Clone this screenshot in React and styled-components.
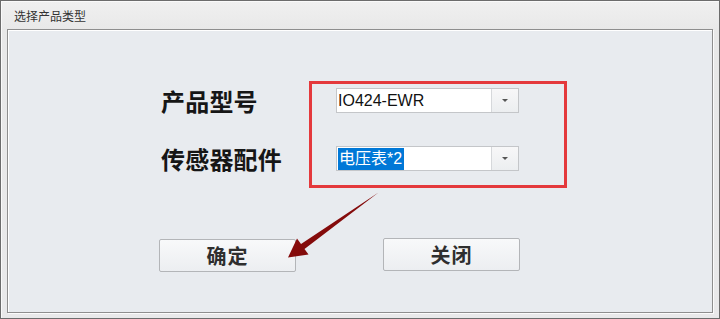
import React from 'react';
import styled, { createGlobalStyle } from 'styled-components';

const GlobalStyle = createGlobalStyle`
    html, body {
        margin: 0;
        padding: 0;
        background: #ffffff;
    }
    * {
        box-sizing: border-box;
    }
`;

const Frame = styled.div`
    position: relative;
    width: 720px;
    height: 319px;
    border: 1px solid #6c6c6c;
    background: linear-gradient(#f0f0f0, #e8e8e8 30px, #e9e9ea);
    box-shadow: inset 1px 1px 0 #fafafa;
    display: flex;
    flex-direction: column;
    font-family: "Noto Sans CJK SC", sans-serif;
`;

const TitleBar = styled.div`
    height: 28px;
    flex-shrink: 0;
    padding: 0 0 0 13px;
    display: flex;
    align-items: center;
    font-size: 12px;
    color: #333333;
`;

const Panel = styled.div`
    margin: 0 6px 0 6px;
    height: 284px;
    border: 1px solid #8e8e8e;
    box-shadow: inset 1px 1px 0 #ffffff, 1px 1px 0 #fbfbfb;
    background: #e8ebef;
    padding: 58px 0 0 151px;
    display: flex;
    flex-direction: column;
`;

const Form = styled.div`
    display: flex;
    flex-direction: column;
    gap: 33px;
    padding-left: 2px;
`;

const Row = styled.div`
    display: flex;
    align-items: center;
    height: 25px;
`;

const Label = styled.div`
    width: 175px;
    font-size: 24px;
    font-weight: 700;
    color: #161616;
    letter-spacing: 0.2px;
    line-height: 25px;
`;

const Combo = styled.div`
    width: 183px;
    height: 25px;
    border: 1px solid #c4c6c9;
    background: #ffffff;
    display: flex;
`;

const ComboText = styled.div`
    flex: 1;
    display: flex;
    align-items: center;
    padding-left: 1px;
    font-family: "Liberation Sans", "Noto Sans CJK SC", sans-serif;
    font-size: 16px;
    color: #111111;
`;

const Selected = styled.span`
    display: inline-block;
    height: 22px;
    line-height: 22px;
    padding: 0 2px 0 1px;
    background: #0078d7;
    color: #ffffff;
`;

const DropButton = styled.div`
    width: 27px;
    border-left: 1px solid #d6d8db;
    background: linear-gradient(#f7f7f8, #eceef0);
    display: flex;
    align-items: center;
    justify-content: center;

    &::after {
        content: '';
        border-left: 3px solid transparent;
        border-right: 3px solid transparent;
        border-top: 3px solid #555555;
    }
`;

const Buttons = styled.div`
    display: flex;
    gap: 87px;
    margin-top: 68px;
`;

const Button = styled.button`
    width: 137px;
    height: 33px;
    margin-top: ${p => p.$up ? '-1px' : '0'};
    border: 1px solid #b3b5b8;
    border-radius: 2px;
    background: linear-gradient(#f8f9fa, #eceef1);
    font-family: "Noto Sans CJK SC", sans-serif;
    font-size: 20px;
    font-weight: 700;
    color: #2e2e2e;
    letter-spacing: 1px;
    padding: 0;
`;

const Highlight = styled.div`
    position: absolute;
    left: 308px;
    top: 80px;
    width: 258px;
    height: 107px;
    border: 3px solid #e4393c;
`;

const Pointer = styled.svg`
    position: absolute;
    left: -1px;
    top: -1px;
    width: 720px;
    height: 319px;
    pointer-events: none;
`;

export default function App() {
    return (
        <>
            <GlobalStyle />
            <Frame>
                <TitleBar>选择产品类型</TitleBar>
                <Panel>
                    <Form>
                        <Row>
                            <Label>产品型号</Label>
                            <Combo>
                                <ComboText>IO424-EWR</ComboText>
                                <DropButton />
                            </Combo>
                        </Row>
                        <Row>
                            <Label>传感器配件</Label>
                            <Combo>
                                <ComboText><Selected>电压表*2</Selected></ComboText>
                                <DropButton />
                            </Combo>
                        </Row>
                    </Form>
                    <Buttons>
                        <Button type="button">确定</Button>
                        <Button type="button" $up>关闭</Button>
                    </Buttons>
                </Panel>
                <Highlight />
                <Pointer viewBox="0 0 720 319">
                    <defs>
                        <linearGradient id="arrowFill" x1="0" y1="0" x2="1" y2="1">
                            <stop offset="0" stopColor="#9a1010" />
                            <stop offset="1" stopColor="#6e0606" />
                        </linearGradient>
                    </defs>
                    <polygon
                        points="378.5,192.5 304.5,249 308.5,254.5 288,257.5 297,238.5 301,244"
                        fill="url(#arrowFill)"
                    />
                </Pointer>
            </Frame>
        </>
    );
}
